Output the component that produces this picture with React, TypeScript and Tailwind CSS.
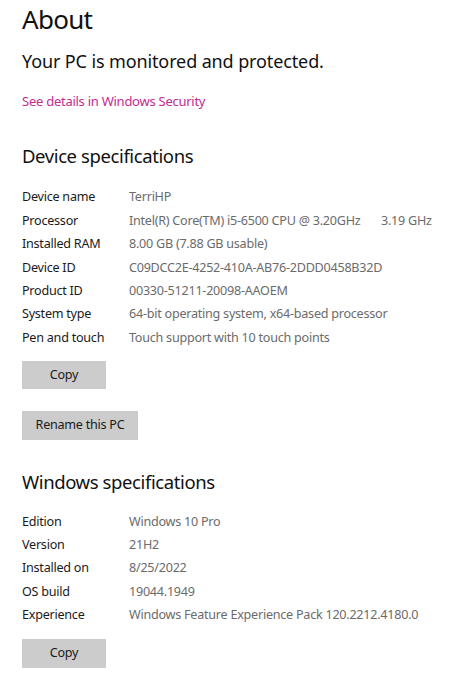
import React from "react";

type Row = [string, React.ReactNode];

const device: Row[] = [
  ["Device name", "TerriHP"],
  [
    "Processor",
    <>
      <span className="inline-block w-[252px]">Intel(R) Core(TM) i5-6500 CPU @ 3.20GHz</span>
      <span>3.19 GHz</span>
    </>,
  ],
  ["Installed RAM", "8.00 GB (7.88 GB usable)"],
  ["Device ID", "C09DCC2E-4252-410A-AB76-2DDD0458B32D"],
  ["Product ID", "00330-51211-20098-AAOEM"],
  ["System type", "64-bit operating system, x64-based processor"],
  ["Pen and touch", "Touch support with 10 touch points"],
];

const windows: Row[] = [
  ["Edition", "Windows 10 Pro"],
  ["Version", "21H2"],
  ["Installed on", "8/25/2022"],
  ["OS build", "19044.1949"],
  ["Experience", "Windows Feature Experience Pack 120.2212.4180.0"],
];

function SpecList({ rows, className }: { rows: Row[]; className?: string }) {
  return (
    <dl className={"grid grid-cols-[107px_1fr] text-[12.6px] leading-[23.4px] tracking-[-0.25px] " + (className ?? "")}>
      {rows.map(([k, v]) => (
        <React.Fragment key={k}>
          <dt className="text-[#1a1a1a]">{k}</dt>
          <dd className="whitespace-nowrap text-[#6b6b6b]">{v}</dd>
        </React.Fragment>
      ))}
    </dl>
  );
}

function GrayButton({ label, className }: { label: string; className?: string }) {
  return (
    <button className={"flex h-[28px] items-center justify-center bg-[#cccccc] text-[12.6px] tracking-[-0.25px] text-[#1a1a1a] " + (className ?? "")}>
      {label}
    </button>
  );
}

export default function App() {
  return (
    <div className="h-[679px] w-[474px] overflow-hidden bg-white pl-[22px] font-['Noto_Sans',sans-serif]">
      <h1 className="mt-[6px] text-[26px] leading-none tracking-[-0.7px] text-[#111]">About</h1>
      <p className="mt-[20px] text-[18px] leading-none tracking-[-0.12px] text-[#111]">Your PC is monitored and protected.</p>
      <a className="mt-[24.5px] block text-[13px] leading-none tracking-[-0.26px] text-[#c42b8f]">See details in Windows Security</a>

      <h2 className="mt-[39px] text-[18.5px] leading-none tracking-[-0.4px] text-[#111]">Device specifications</h2>
      <SpecList rows={device} className="mt-[20.4px]" />
      <GrayButton label="Copy" className="mt-[12px] w-[84px]" />
      <GrayButton label="Rename this PC" className="mt-[22px] h-[29px] w-[116px]" />

      <h2 className="mt-[32.6px] text-[18.5px] leading-none tracking-[-0.4px] text-[#111]">Windows specifications</h2>
      <SpecList rows={windows} className="mt-[18.2px]" />
      <GrayButton label="Copy" className="mt-[12.7px] h-[29px] w-[84px]" />
    </div>
  );
}
